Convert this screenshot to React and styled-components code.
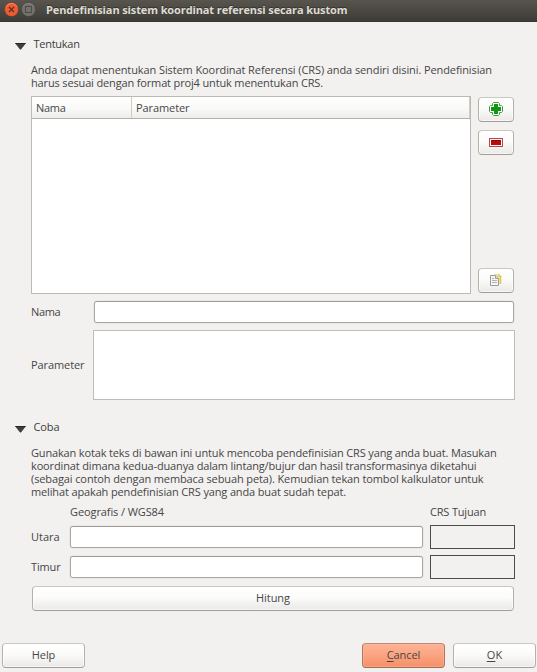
import React from 'react';
import styled, { createGlobalStyle, css } from 'styled-components';

const GlobalStyle = createGlobalStyle`
  * { box-sizing: border-box; }
  body { margin: 0; background: #f2f1f0; }
`;

const Dialog = styled.main`
  width: 537px;
  height: 672px;
  display: flex;
  flex-direction: column;
  overflow: hidden;
  background: #f2f1f0;
  color: #464646;
  font: 11px/13px "Open Sans", "Noto Sans", sans-serif;
`;

const TitleBar = styled.header`
  height: 22px;
  display: flex;
  align-items: flex-start;
  padding: 2px 0 0 4px;
  gap: 2px;
  background: linear-gradient(#57554d, #3d3c38);
  border-bottom: 1px solid #383733;
`;

const WindowIcon = styled.svg`
  width: 15px;
  height: 15px;
  flex: none;
`;

const Title = styled.h1`
  margin: 1px 0 0 8px;
  font-size: 11px;
  font-weight: 700;
  line-height: 13px;
  letter-spacing: -0.115px;
  color: #dfdbd2;
  text-shadow: 0 -1px 0 #33322e;
  white-space: nowrap;
`;

const Text = styled.span`
  display: block;
  white-space: nowrap;
  letter-spacing: ${(p) => p.$track || 0}px;
  transform: translateY(-1px);
`;

const Paragraph = styled.div`
  margin: ${(p) => p.$margin};
`;

const SectionHeader = styled.div`
  display: flex;
  align-items: center;
  height: 13px;
  margin: ${(p) => p.$top}px 0 0 15px;
  gap: 7.5px;
  color: #3c3c3c;
`;

const Arrow = styled.svg`
  width: 11px;
  height: 7px;
  flex: none;
  margin-top: 4px;
`;

const TableArea = styled.div`
  display: flex;
  justify-content: space-between;
  height: 198px;
  margin: 6px 23px 0 31px;
`;

const Table = styled.div`
  width: 440px;
  background: #fff;
  border: 1px solid #bdb9b3;
`;

const TableHead = styled.div`
  display: grid;
  grid-template-columns: 100px 1fr;
  height: 22px;
  background: linear-gradient(#fff, #f9f9f8 55%, #eeedec);
  border-bottom: 1px solid #b3b0ab;
`;

const HeadCell = styled.div`
  display: flex;
  align-items: center;
  padding: 1px 4px 0;
  border-right: 1px solid #cfccc8;
`;

const ToolColumn = styled.div`
  display: flex;
  flex-direction: column;
  gap: 8px;
  padding: 1px 0;
  & > :last-child { margin: auto 0 0; }
`;

const Button = styled.button`
  display: flex;
  align-items: center;
  justify-content: center;
  width: ${(p) => p.$width}px;
  height: 25px;
  flex: none;
  padding: 0;
  border: 1px solid;
  border-color: #cbc7c1 #b4b1ab #a19e99;
  border-radius: 4px;
  background: linear-gradient(#fff, #fbfbfa 45%, #eae9e8);
  box-shadow: inset 1px 0 #ffffffaa, inset -1px 0 #ffffffaa, inset 0 -1px #f7f6f5;
  color: #464646;
  font: inherit;
  ${(p) => p.$primary && css`
    border-color: #bc8c78 #ae7860 #9d6c57;
    background: linear-gradient(#fdb394, #fba583 45%, #f68f67);
    box-shadow: inset 0 0 0 1px #ffb99c88;
  `}
`;

const Mnemonic = styled.span`
  text-decoration: underline;
  text-underline-offset: 2px;
  text-decoration-thickness: 1px;
  text-decoration-skip-ink: none;
`;

const ToolIcon = styled.svg`
  display: block;
  width: 16px;
  height: 16px;
  margin-bottom: 1px;
`;

const FieldRow = styled.div`
  display: grid;
  grid-template-columns: ${(p) => p.$label}px 1fr;
  align-items: center;
  margin: ${(p) => p.$margin};
`;

const Input = styled.input`
  display: block;
  width: 100%;
  min-width: 0;
  height: 22px;
  padding: 0 4px;
  border: 1px solid;
  border-color: #9f9b96 #aaa7a2 #a9a6a1;
  border-radius: 3px;
  background: #fff;
  box-shadow: 0 0 0 1px #ebe9e7;
  font: inherit;
  outline: none;
`;

const TextArea = styled.textarea`
  display: block;
  width: 100%;
  height: 70px;
  border: 1px solid #bfbbb5;
  background: #fff;
  resize: none;
  outline: none;
`;

const TestGrid = styled.div`
  display: grid;
  grid-template-columns: 39px 353px 92px;
  grid-template-rows: 13px 24px 24px;
  row-gap: 6px;
  align-items: center;
  margin: 7px 22px 0 31px;
  & > :nth-child(3n) { margin-left: 7px; }
`;

const Result = styled.output`
  height: 24px;
  border: 1px solid #4c4c4c;
`;

const Calculate = styled.div`
  margin: 7px 0 0 32px;
`;

const Footer = styled.footer`
  display: flex;
  gap: 8px;
  margin: 32px 0 0 2px;
  padding-right: 1px;
  & > :first-child { margin-right: auto; }
`;

const Collapse = () => (
  <Arrow viewBox="0 0 11 7">
    <path d="M0.3 0.5H10.7L6 6.5H5Z" fill="#3c403d" />
    <path d="M0.3 0.5H10.7" stroke="#222624" />
  </Arrow>
);

const PlusIcon = () => (
  <ToolIcon viewBox="0 0 16 16">
    <path
      d="M5.5 1.5H10.5L11.5 2.5V4.5H13.5L14.5 5.5V10.5L13.5 11.5H11.5V13.5L10.5 14.5H5.5L4.5 13.5V11.5H2.5L1.5 10.5V5.5L2.5 4.5H4.5V2.5Z"
      fill="#f6fff6"
      stroke="#4a9555"
      strokeLinejoin="round"
    />
    <path d="M6 3H10V6H13V10H10V13H6V10H3V6H6Z" fill="#129512" />
  </ToolIcon>
);

const MinusIcon = () => (
  <ToolIcon viewBox="0 0 16 16">
    <rect x="1.5" y="4.5" width="13" height="8" fill="#fff4f4" stroke="#b5484b" />
    <rect x="3" y="6" width="10" height="5" fill="#b50c0c" />
    <rect x="3" y="6" width="10" height="1" fill="#8d0808" />
  </ToolIcon>
);

const CopyIcon = () => (
  <ToolIcon viewBox="0 0 16 16">
    <path d="M6 2H11.5L13.5 4V12H6Z" fill="#eee38c" />
    <path d="M11 2V4.5H13.5M12.5 5V12" stroke="#d9ca62" fill="none" />
    <path d="M2.5 3.5H7.5L10.5 6.5V13.5H2.5Z" fill="#f5f5f5" stroke="#9b9b9b" />
    <path d="M7.5 3.5V6.5H10.5" fill="#ddd" stroke="#a2a2a2" />
    <path d="M4 6.5H6M4 8.5H9M4 10.5H9" stroke="#b2b2b2" />
  </ToolIcon>
);

export default function App() {
  return (
    <>
      <GlobalStyle />
      <Dialog>
        <TitleBar>
          <WindowIcon viewBox="0 0 15 15">
            <circle cx="7.5" cy="7.5" r="7" fill="#ec5b31" stroke="#35332f" strokeWidth=".4" />
            <path d="M2 5a6 6 0 0 1 11 0" stroke="#f58b65" fill="none" />
            <path d="M5 5L10 10M10 5L5 10" stroke="#60301f" strokeWidth="1.2" />
          </WindowIcon>
          <WindowIcon viewBox="0 0 15 15">
            <circle cx="7.5" cy="7.5" r="7" fill="#73716b" stroke="#353430" strokeWidth=".4" />
            <path d="M2 5a6 6 0 0 1 11 0" stroke="#85837c" fill="none" />
            <rect x="4.5" y="4.5" width="6" height="6" fill="none" stroke="#4c4b46" />
          </WindowIcon>
          <Title>Pendefinisian sistem koordinat referensi secara kustom</Title>
        </TitleBar>

        <SectionHeader $top={16}>
          <Collapse />
          <Text $track={-0.26}>Tentukan</Text>
        </SectionHeader>
        <Paragraph $margin="13px 0 0 31px">
          <Text $track={-0.096}>Anda dapat menentukan Sistem Koordinat Referensi (CRS) anda sendiri disini. Pendefinisian</Text>
          <Text $track={-0.148}>harus sesuai dengan format proj4 untuk menentukan CRS.</Text>
        </Paragraph>

        <TableArea>
          <Table>
            <TableHead>
              <HeadCell><Text $track={-0.3}>Nama</Text></HeadCell>
              <HeadCell><Text $track={-0.088}>Parameter</Text></HeadCell>
            </TableHead>
          </Table>
          <ToolColumn>
            <Button $width={36} aria-label="Tambah"><PlusIcon /></Button>
            <Button $width={36} aria-label="Hapus"><MinusIcon /></Button>
            <Button $width={36} aria-label="Salin"><CopyIcon /></Button>
          </ToolColumn>
        </TableArea>

        <FieldRow $label={63} $margin="7px 23px 0 31px">
          <Text $track={-0.35}>Nama</Text>
          <Input />
        </FieldRow>
        <FieldRow $label={62} $margin="7px 22px 0 31px">
          <Text $track={-0.088}>Parameter</Text>
          <TextArea />
        </FieldRow>

        <SectionHeader $top={21}>
          <Collapse />
          <Text $track={-0.097}>Coba</Text>
        </SectionHeader>
        <Paragraph $margin="13px 0 0 31px">
          <Text $track={-0.153}>Gunakan kotak teks di bawan ini untuk mencoba pendefinisian CRS yang anda buat. Masukan</Text>
          <Text $track={-0.146}>koordinat dimana kedua-duanya dalam lintang/bujur dan hasil transformasinya diketahui</Text>
          <Text $track={-0.112}>(sebagai contoh dengan membaca sebuah peta). Kemudian tekan tombol kalkulator untuk</Text>
          <Text $track={-0.137}>melihat apakah pendefinisian CRS yang anda buat sudah tepat.</Text>
        </Paragraph>

        <TestGrid>
          <span />
          <Text $track={-0.094}>Geografis / WGS84</Text>
          <Text $track={-0.179}>CRS Tujuan</Text>
          <Text $track={-0.032}>Utara</Text>
          <Input />
          <Result />
          <Text $track={-0.152}>Timur</Text>
          <Input />
          <Result />
        </TestGrid>

        <Calculate>
          <Button $width={482}><Text $track={-0.045}>Hitung</Text></Button>
        </Calculate>

        <Footer>
          <Button $width={83}><Text $track={-0.073}>Help</Text></Button>
          <Button $width={83} $primary><Text $track={-0.085}><Mnemonic>C</Mnemonic>ancel</Text></Button>
          <Button $width={83}><Text $track={0.1}><Mnemonic>O</Mnemonic>K</Text></Button>
        </Footer>
      </Dialog>
    </>
  );
}
